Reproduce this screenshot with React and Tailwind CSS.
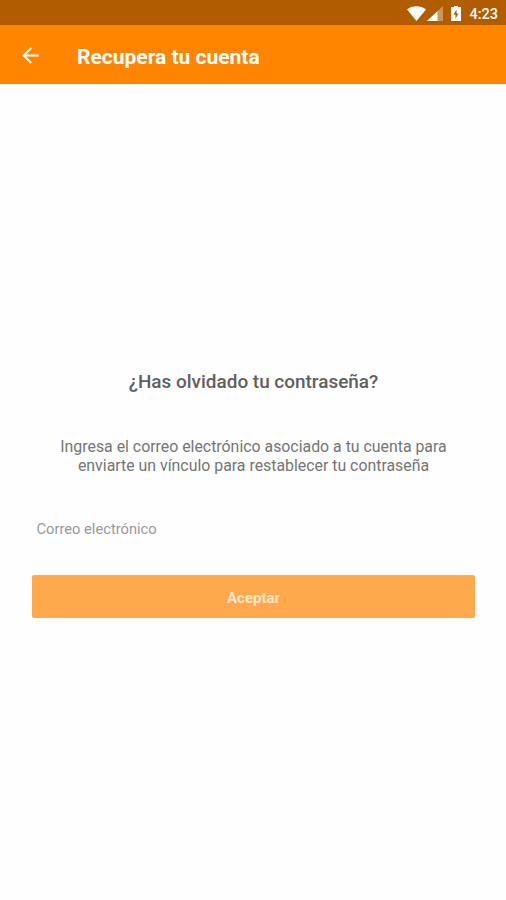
import React from "react";

function StatusBar() {
  return (
    <div className="flex h-[25px] items-center justify-end bg-[#b25c00] pt-[2px] pr-[8px] text-white">
      <svg className="h-[15px] w-[19px]" viewBox="0 0 19 15" fill="currentColor">
        <path d="M0 3.600C5.400-.8 13.600-.8 19 3.600L9.500 15z" />
      </svg>
      <svg className="ml-[1px] h-[15px] w-[16px]" viewBox="0 0 16 15" fill="currentColor">
        <path d="M16 0v15H0z" opacity="0.35" />
        <path d="M10.500 5.200V15H0z" />
      </svg>
      <svg className="ml-[8px] h-[15px] w-[10px]" viewBox="0 0 10 15" fill="currentColor">
        <path
          fillRule="evenodd"
          d="M3 0h4v1h3v14H0V1h3zM5.500 3.500L2.500 8.700h2v4l3-5.200h-2z"
        />
      </svg>
      <span className="mt-[3px] ml-[8px] text-[14.500px] leading-none font-medium">4:23</span>
    </div>
  );
}

function Header() {
  return (
    <header className="flex h-[59px] items-center bg-[#ff8400] pt-[3px] pl-[18px] text-white">
      <button aria-label="Volver" className="-mt-[1px] h-[25px] w-[25px]">
        <svg viewBox="0 0 24 24" fill="currentColor">
          <path d="M20 11H7.830l5.590-5.590L12 4l-8 8 8 8 1.410-1.410L7.830 13H20v-2z" />
        </svg>
      </button>
      <h1 className="mt-[2px] ml-[34px] text-[21px] leading-[28px] font-bold">Recupera tu cuenta</h1>
    </header>
  );
}

function App() {
  return (
    <div className="flex h-[900px] w-[506px] flex-col bg-[#fefefe] font-['Roboto',sans-serif]">
      <StatusBar />
      <Header />
      <main className="flex flex-col pt-[284px] pr-[31px] pl-[32px]">
        <h2 className="text-center text-[18.950px] leading-[28px] font-medium text-[#606060]">
          ¿Has olvidado tu contraseña?
        </h2>
        <p className="mt-[41px] text-center text-[15.870px] leading-[19px] text-[#757575]">
          Ingresa el correo electrónico asociado a tu cuenta para
          <br />
          enviarte un vínculo para restablecer tu contraseña
        </p>
        <input
          type="email"
          placeholder="Correo electrónico"
          className="mt-[44px] h-[20px] bg-transparent pl-[4.500px] text-[14.700px] text-[#999] outline-none placeholder:text-[#999]"
        />
        <button className="mt-[36px] h-[43px] rounded-[2px] bg-[#ffa94d] pt-[3px] text-[15px] font-bold text-[#ffe5ca]">
          Aceptar
        </button>
      </main>
    </div>
  );
}

export default App;
